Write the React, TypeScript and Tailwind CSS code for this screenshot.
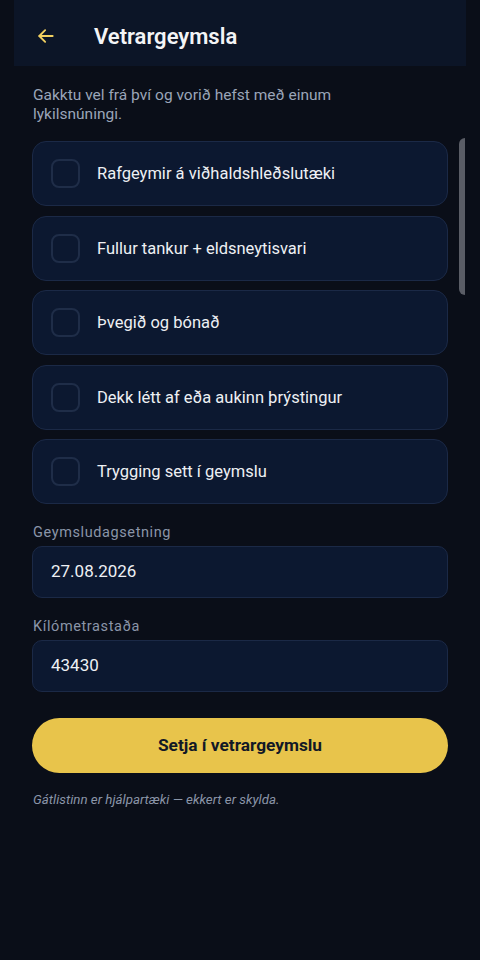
const items = [
  "Rafgeymir á viðhaldshleðslutæki",
  "Fullur tankur + eldsneytisvari",
  "Þvegið og bónað",
  "Dekk létt af eða aukinn þrýstingur",
  "Trygging sett í geymslu",
];

export default function App() {
  return (
    <div
      className="relative min-h-[960px] w-[480px] bg-[#0a0e18] text-white"
      style={{ fontFamily: "Roboto, 'Noto Sans', sans-serif" }}
    >
      <header className="mx-[14px] flex h-[66px] items-center bg-[#0c1527] pl-[22px] pt-[6px]">
        <svg width="20" height="20" viewBox="0 0 24 24" fill="none" stroke="#f2d161" strokeWidth="2.2" strokeLinecap="round" strokeLinejoin="round">
          <path d="M20 12H4" />
          <path d="M11 5l-7 7 7 7" />
        </svg>
        <h1 className="ml-[38px] text-[22px] font-semibold text-[#f3f4f6]">
          Vetrargeymsla
        </h1>
      </header>

      <div className="px-[32px]">
        <p className="mt-[20px] pl-px text-[15.5px] leading-[19px] text-[#9aa5b8]">
          Gakktu vel frá því og vorið hefst með einum
          <br />
          lykilsnúningi.
        </p>

        <ul className="mt-[17px] flex flex-col gap-[9.5px]">
          {items.map((t) => (
            <li
              key={t}
              className="flex h-[65px] items-center rounded-[14px] border border-[#1b2946] bg-[#0c1830] pl-[18px]"
            >
              <span className="h-[29px] w-[29px] rounded-[8px] border-2 border-[#1f2d48]" />
              <span className="ml-[17px] pt-[2px] text-[16.5px] text-[#eef0f4]">{t}</span>
            </li>
          ))}
        </ul>

        <label className="mt-[19px] block pl-px text-[14.5px] leading-[20px] tracking-[0.6px] text-[#8a95a8]">
          Geymsludagsetning
        </label>
        <div className="mt-[3px] flex h-[52px] items-center rounded-[10px] border border-[#1b2946] bg-[#0c1830] pl-[18px] text-[17px] text-[#eef0f4]">
          27.08.2026
        </div>

        <label className="mt-[19px] block pl-px text-[14.5px] leading-[20px] tracking-[0.6px] text-[#8a95a8]">
          Kílómetrastaða
        </label>
        <div className="mt-[3px] flex h-[52px] items-center rounded-[10px] border border-[#1b2946] bg-[#0c1830] pl-[18px] text-[17px] text-[#eef0f4]">
          43430
        </div>

        <button className="mt-[26px] flex h-[55px] w-full items-center justify-center rounded-full bg-[#e8c44b] text-[17.3px] font-bold text-[#121826]">
          Setja í vetrargeymslu
        </button>

        <p className="mt-[18px] pl-px text-[13.3px] leading-[17px] italic text-[#8a95a8]">
          Gátlistinn er hjálpartæki — ekkert er skylda.
        </p>
      </div>

      <div className="absolute left-[459px] top-[138px] h-[157px] w-[6px] rounded-l-full bg-[#5a5d66]" />
    </div>
  );
}
